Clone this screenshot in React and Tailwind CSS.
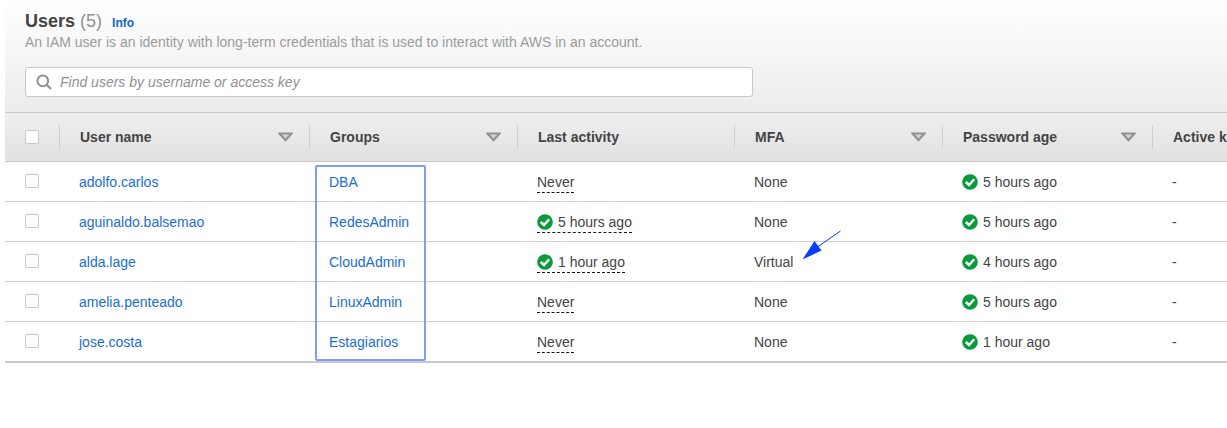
const COLUMNAS = [
  { label: 'User name', ancho: 'w-[250px]', sort: true },
  { label: 'Groups', ancho: 'w-[208px]', sort: true },
  { label: 'Last activity', ancho: 'w-[217px]', sort: false },
  { label: 'MFA', ancho: 'w-[208px]', sort: true },
  { label: 'Password age', ancho: 'w-[210px]', sort: true },
  { label: 'Active key age', ancho: 'w-[200px]', sort: false },
]

const USUARIOS = [
  { nombre: 'adolfo.carlos', grupo: 'DBA', actividad: 'Never', activo: false, mfa: 'None', password: '5 hours ago' },
  { nombre: 'aguinaldo.balsemao', grupo: 'RedesAdmin', actividad: '5 hours ago', activo: true, mfa: 'None', password: '5 hours ago' },
  { nombre: 'alda.lage', grupo: 'CloudAdmin', actividad: '1 hour ago', activo: true, mfa: 'Virtual', password: '4 hours ago' },
  { nombre: 'amelia.penteado', grupo: 'LinuxAdmin', actividad: 'Never', activo: false, mfa: 'None', password: '5 hours ago' },
  { nombre: 'jose.costa', grupo: 'Estagiarios', actividad: 'Never', activo: false, mfa: 'None', password: '1 hour ago' },
]

function IconoOk() {
  return (
    <svg width="16" height="16" viewBox="0 0 16 16" className="shrink-0">
      <circle cx="8" cy="8" r="7.8" fill="#0b9a3c" />
      <path d="M3.8 8 L7 11 L12.2 5.2" fill="none" stroke="#fff" strokeWidth="2.4" />
    </svg>
  )
}

function Triangulo() {
  return (
    <svg width="15" height="10" viewBox="0 0 15 10" className="shrink-0">
      <path d="M1.5 1.5 H13.5 L7.5 8.2 Z" fill="#d4d5d5" stroke="#8f9292" strokeWidth="2.2" />
    </svg>
  )
}

function Checkbox({ claro }) {
  return (
    <span className={`block w-[14px] h-[14px] rounded-[2px] border border-[#c8c8c8] ${claro ? 'bg-white' : 'bg-[#fdfdfd]'}`} />
  )
}

export default function App() {
  return (
    <div className="relative w-[1227px] h-[428px] overflow-hidden bg-white pl-[5px] text-[14px] text-[#444] font-['Liberation_Sans',Arial,sans-serif]">

      {/* Cabecera */}
      <div className="h-[112px] pl-5 pt-[10px] bg-gradient-to-b from-white to-[#ececec]">
        <div className="flex items-baseline h-[22px]">
          <span className="text-[18px] leading-[22px] font-bold text-[#444]">Users</span>
          <span className="text-[18px] leading-[22px] text-[#8f9292] ml-[5px]">(5)</span>
          <span className="text-[12px] font-bold text-[#0f67c4] ml-[10px]">Info</span>
        </div>
        <div className="text-[14px] leading-[20px] text-[#9a9c9c]">
          An IAM user is an identity with long-term credentials that is used to interact with AWS in an account.
        </div>
        <div className="flex items-center gap-[8px] w-[728px] h-[30px] mt-[15px] pl-[10px] bg-white border border-[#c8c8c8] rounded-[3px]">
          <svg width="16" height="16" viewBox="0 0 16 16" className="shrink-0">
            <circle cx="6.8" cy="6.8" r="5.4" fill="none" stroke="#8f9292" strokeWidth="2" />
            <path d="M10.8 10.8 L15 15" stroke="#8f9292" strokeWidth="2" />
          </svg>
          <span className="italic text-[#8f9292]">Find users by username or access key</span>
        </div>
      </div>

      {/* Encabezado de tabla */}
      <div className="flex items-center h-[50px] border-y border-[#c8c8c8] bg-gradient-to-b from-[#efefef] to-[#e1e1e1]">
        <div className="w-[54px] pl-5 shrink-0"><Checkbox claro /></div>
        {COLUMNAS.map(c => (
          <div key={c.label} className={`${c.ancho} shrink-0 h-[24px] flex items-center justify-between border-l border-[#cfcfcf] pl-5 pr-[16px] font-bold whitespace-nowrap text-[#444]`}>
            <span>{c.label}</span>
            {c.sort && <Triangulo />}
          </div>
        ))}
      </div>

      {/* Filas */}
      <div className="border-b-2 border-[#c8c8c8]">
        {USUARIOS.map((u, i) => (
          <div key={u.nombre} className={`flex items-center pt-[1px] ${i < USUARIOS.length - 1 ? 'h-[40px] border-b border-[#cfcfcf]' : 'h-[39px]'}`}>
            <div className="w-[54px] pl-5 shrink-0 -mt-[3px]"><Checkbox /></div>
            <div className="w-[250px] shrink-0 pl-5 text-[#1a6ed0]">{u.nombre}</div>
            <div className="w-[208px] shrink-0 pl-5 text-[#1a6ed0]">{u.grupo}</div>
            <div className="w-[217px] shrink-0 pl-5 flex items-center">
              <span className="flex items-center gap-[5px] h-[22px] pt-[1px] border-b border-dashed border-[#16191f]">
                {u.activo && <IconoOk />}
                <span>{u.actividad}</span>
              </span>
            </div>
            <div className="w-[208px] shrink-0 pl-5">{u.mfa}</div>
            <div className="w-[210px] shrink-0 pl-5 flex items-center gap-[5px]"><IconoOk /><span>{u.password}</span></div>
            <div className="w-[55px] shrink-0 pl-5">-</div>
          </div>
        ))}
      </div>

      {/* Anotaciones sobre la captura */}
      <div className="absolute left-[315px] top-[165px] w-[111px] h-[196px] border-2 border-[#7d9dfb] rounded-[2px]" />
      <svg className="absolute left-[800px] top-[228px]" width="44" height="36" viewBox="0 0 44 36">
        <path d="M40.5 3 L16 20" stroke="#0a3cff" strokeWidth="1" fill="none" />
        <path d="M2.5 31.5 L14.5 13 L21.5 22.5 Z" fill="#0a3cff" />
      </svg>
    </div>
  )
}
